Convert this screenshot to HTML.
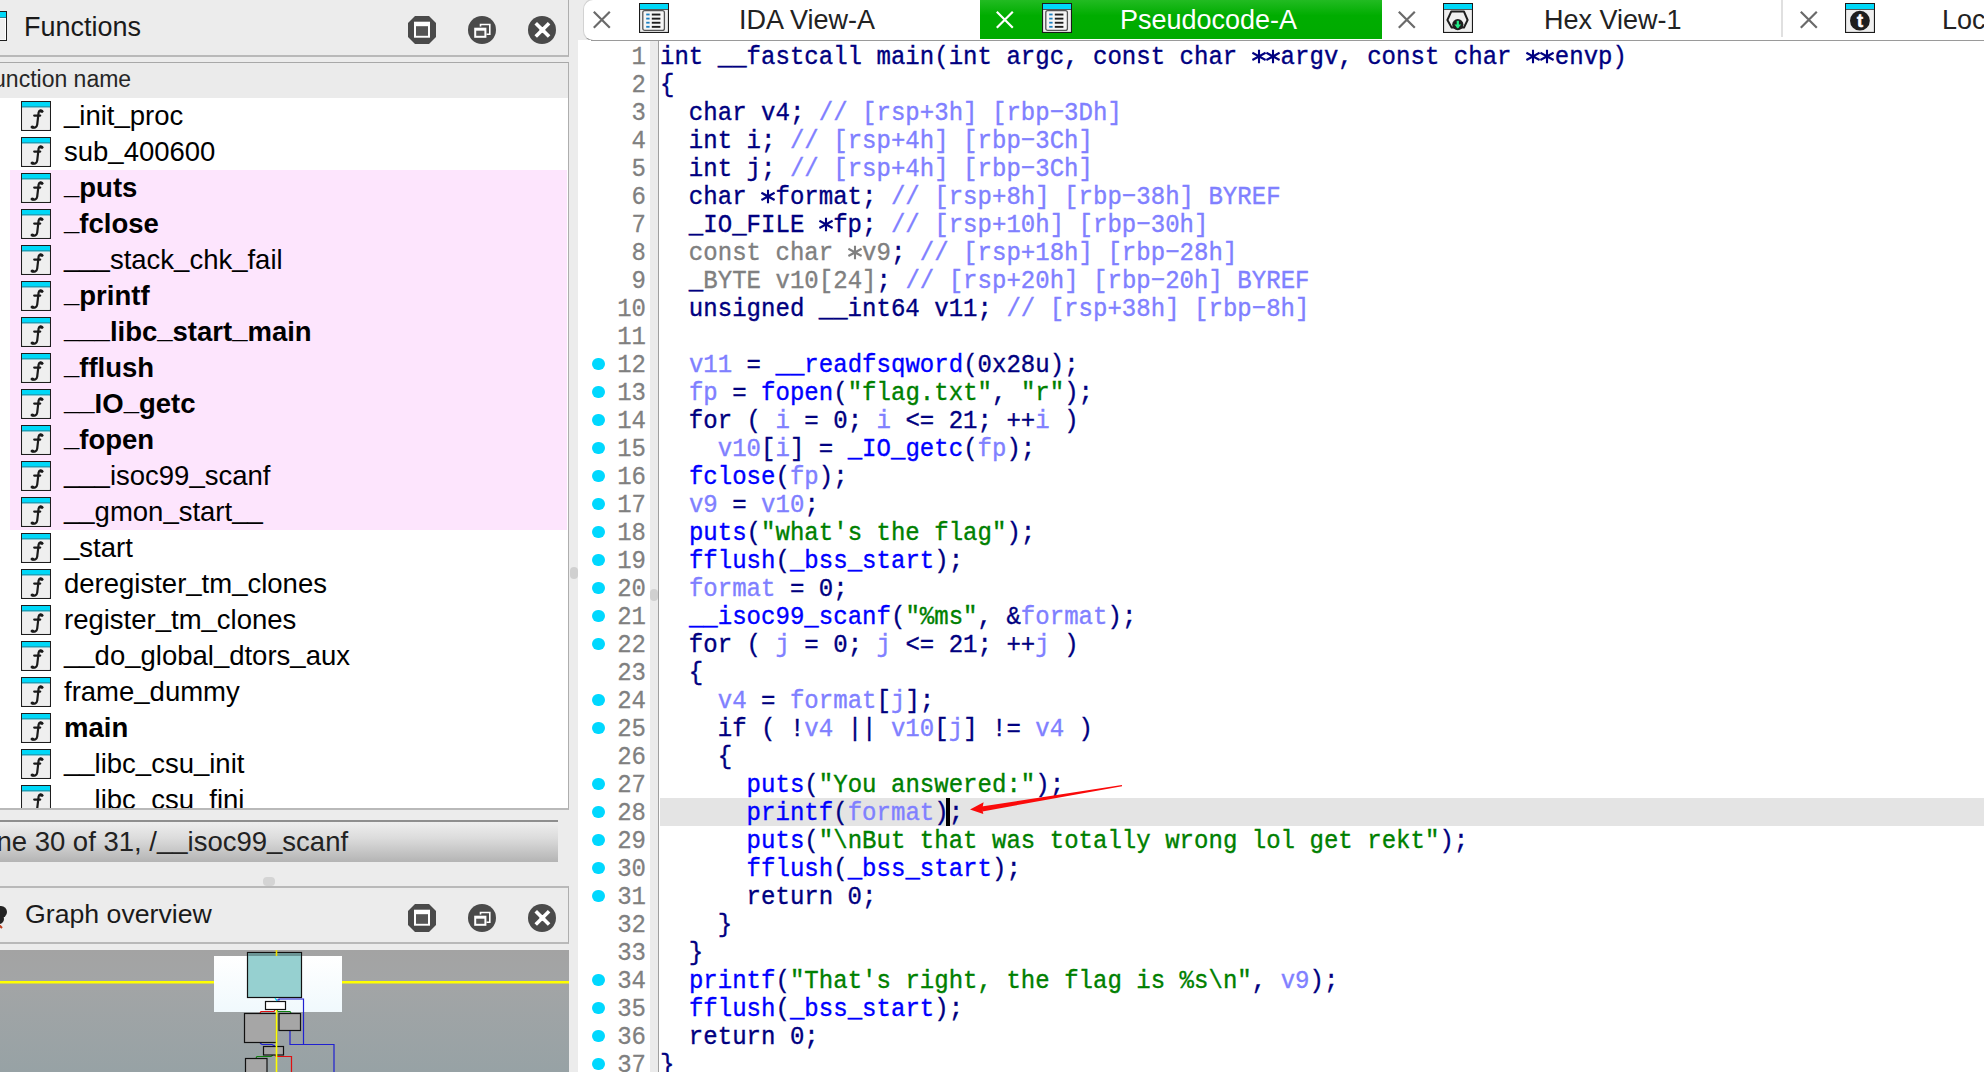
<!DOCTYPE html><html><head><meta charset="utf-8"><style>
*{margin:0;padding:0;box-sizing:border-box}
html,body{width:1984px;height:1072px;overflow:hidden;background:#ececec;position:relative;font-family:"Liberation Sans",sans-serif}
.abs{position:absolute}
/* left panel */
#fhdr{left:0;top:0;width:569px;height:57px;background:#ececec;border-right:1.5px solid #aeaeae;border-bottom:2px solid #b9b9b9}
#fhdr .t{left:24px;top:11.5px;font-size:27px;color:#1a1a1a;white-space:nowrap}
#colhdr{left:0;top:62px;width:569px;height:36px;background:#ebebeb;border-top:1.5px solid #a8a8a8;border-right:1.5px solid #aeaeae}
#colhdr .t{left:-21px;top:3px;font-size:23px;color:#262626;white-space:nowrap}
#flist{left:0;top:98px;width:569px;height:712px;background:#fff;border-right:1.5px solid #aeaeae;border-bottom:2px solid #b9b9b9;overflow:hidden}
.row{position:absolute;left:0;width:567px;height:36px}
.row.pk{background:#fde5fd;left:10px;width:557px}
.row .ic{position:absolute;left:21px;top:3px;width:30px;height:30px}
.row .nm{position:absolute;left:64px;top:2px;font-size:27.5px;color:#000;white-space:nowrap}
.row.pk .ic{left:11px}
.row.pk .nm{left:54px}
.row .nm.b{font-weight:bold}
#status{left:0;top:820px;width:558px;height:42px;border-top:2px solid #8e8e8e;background:linear-gradient(#eeeeee,#dcdcdc 40%,#b4b4b4)}
#status .t{left:-25px;top:3.5px;font-size:27.5px;color:#222;white-space:nowrap}
#split1{left:263px;top:877px;width:12px;height:9px;border-radius:4px;background:#d4d4d4}
#ghdr{left:0;top:886px;width:569px;height:58px;background:#ececec;border-top:2px solid #b9b9b9;border-right:1.5px solid #aeaeae;border-bottom:2px solid #b9b9b9}
#ghdr .t{left:25px;top:11px;font-size:26.7px;color:#1a1a1a;white-space:nowrap}
#graph{left:0;top:950px;width:570px;height:122px;overflow:hidden}
/* right */
#vsplit{left:569px;top:0;width:9px;height:1072px;background:#ececec}
#vhandle{left:570px;top:567px;width:8px;height:12px;border-radius:4px;background:#d0d0d0}
#tabbar{left:578px;top:0;width:1406px;height:40px;background:#ececec}
#tabwhite{left:583px;top:-1px;width:1401px;height:41.5px;background:#fff;border-left:1px solid #d2d2d2;border-bottom:1.5px solid #9a9a9a;border-top:1px solid #d2d2d2;border-radius:10px 0 0 10px}
#tabline{left:591px;top:39.5px;width:1393px;height:1.5px;background:#9a9a9a;z-index:5}
#gtab{left:980px;top:0;width:402px;height:39px;background:linear-gradient(#22bb22,#00ad00 40%,#00aa00)}
.tabt{position:absolute;top:5px;font-size:27px;white-space:nowrap;color:#222}
#code{left:578px;top:40px;width:1406px;height:1032px;background:#fff;overflow:hidden}
#gut{left:650px;top:40px;width:8px;height:1032px;background:#ebebeb}
#gutl{left:658px;top:40px;width:1px;height:1032px;background:#a0a0a0}
#ghandle{left:650px;top:589px;width:8px;height:12px;border-radius:4px;background:#d0d0d0}
#hl{left:660px;top:798px;width:1324px;height:28px;background:#e4e4e4}
.ln{position:absolute;left:600px;width:46px;-webkit-text-stroke:0.25px currentColor;transform-origin:0 20px;transform:translateY(2px) scaleY(1.08);text-align:right;font-family:"Liberation Mono",monospace;font-size:24px;color:#808080;height:28px;line-height:28px;white-space:pre}
.cl{position:absolute;left:660px;letter-spacing:0.03px;-webkit-text-stroke:0.35px currentColor;transform-origin:0 20px;transform:translateY(2px) scaleY(1.08);font-family:"Liberation Mono",monospace;font-size:24px;color:#000080;height:28px;line-height:28px;white-space:pre}
.dot{position:absolute;left:592px;width:12.5px;height:12.5px;border-radius:50%;background:#00d8ff}
.astsvg{position:absolute;top:4.6px;overflow:visible}
.us{position:relative;top:-3px}
.n{color:#000080}.b{color:#0000ff}.v{color:#8080ff}.c{color:#8080ff}.s{color:#008000}.g{color:#808080}
</style></head><body>
<div id="fhdr" class="abs"><svg class="abs" style="left:-17px;top:11px" width="24" height="30" viewBox="0 0 24 30"><rect x="0.5" y="0.5" width="23" height="29" fill="#fff" stroke="#1e1e1e"/><rect x="1" y="1" width="22" height="5" fill="#00d8f8"/><rect x="1" y="6" width="22" height="1" fill="#2a7f90"/><rect x="1" y="8" width="21" height="20.5" fill="#efefef"/></svg><div class="t abs">Functions</div><svg class="abs" style="left:407px;top:15px" width="30" height="30" viewBox="0 0 30 30"><path d="M8,1 L22,1 L29,8 L29,22 L22,29 L8,29 L1,22 L1,8 Z" fill="#4a4a4a"/><rect x="7" y="6.7" width="16" height="16" fill="#fff"/><rect x="9" y="11.2" width="12" height="9.6" fill="#555"/></svg><svg class="abs" style="left:467px;top:15px" width="30" height="30" viewBox="0 0 30 30"><circle cx="15" cy="15" r="14" fill="#4a4a4a"/><path d="M13.5,11.5 L13.5,9.5 L22.8,9.5 L22.8,19.3 L19.5,19.3" fill="none" stroke="#fff" stroke-width="1.6"/><rect x="7.2" y="12.7" width="12.2" height="10.1" fill="#fff"/><rect x="9.2" y="15.7" width="8.2" height="5.1" fill="#555"/></svg><svg class="abs" style="left:527px;top:15px" width="30" height="30" viewBox="0 0 30 30"><circle cx="15" cy="15" r="14" fill="#4a4a4a"/><path d="M10,9.5 L20.8,20.3 M20.8,9.5 L10,20.3" stroke="#fff" stroke-width="3.6" stroke-linecap="square"/><circle cx="15.4" cy="14.9" r="2.8" fill="#fff"/></svg></div>
<div id="colhdr" class="abs"><div class="t abs">Function name</div></div>
<div id="flist" class="abs"><div class="row" style="top:0px"><svg class="ic" viewBox="0 0 30 30" width="30" height="30"><rect x="0.5" y="0.5" width="29" height="29" fill="#fff" stroke="#1e1e1e" stroke-width="1.2"/><rect x="1" y="1" width="28" height="5.2" fill="#00d8f8"/><rect x="1" y="5.4" width="28" height="1" fill="#2a7f90"/><rect x="2" y="7" width="26" height="21" fill="#efefef"/><path d="M21.2,10.4 C20.6,8.6 18.2,8.9 17.6,11.6 L16.2,23.6 C15.8,26.2 13.6,27.2 11.4,26.4" fill="none" stroke="#1a1a1a" stroke-width="2.2" stroke-linecap="round"/><ellipse cx="20.6" cy="10.4" rx="1.9" ry="1.4" fill="#1a1a1a"/><ellipse cx="11.4" cy="26.1" rx="1.9" ry="1.5" fill="#1a1a1a"/><path d="M13.2,14.6 L19.2,14.6" stroke="#1a1a1a" stroke-width="2.2" stroke-linecap="round"/></svg><div class="nm"><span class="us">_</span>init<span class="us">_</span>proc</div></div><div class="row" style="top:36px"><svg class="ic" viewBox="0 0 30 30" width="30" height="30"><rect x="0.5" y="0.5" width="29" height="29" fill="#fff" stroke="#1e1e1e" stroke-width="1.2"/><rect x="1" y="1" width="28" height="5.2" fill="#00d8f8"/><rect x="1" y="5.4" width="28" height="1" fill="#2a7f90"/><rect x="2" y="7" width="26" height="21" fill="#efefef"/><path d="M21.2,10.4 C20.6,8.6 18.2,8.9 17.6,11.6 L16.2,23.6 C15.8,26.2 13.6,27.2 11.4,26.4" fill="none" stroke="#1a1a1a" stroke-width="2.2" stroke-linecap="round"/><ellipse cx="20.6" cy="10.4" rx="1.9" ry="1.4" fill="#1a1a1a"/><ellipse cx="11.4" cy="26.1" rx="1.9" ry="1.5" fill="#1a1a1a"/><path d="M13.2,14.6 L19.2,14.6" stroke="#1a1a1a" stroke-width="2.2" stroke-linecap="round"/></svg><div class="nm">sub<span class="us">_</span>400600</div></div><div class="row pk" style="top:72px"><svg class="ic" viewBox="0 0 30 30" width="30" height="30"><rect x="0.5" y="0.5" width="29" height="29" fill="#fff" stroke="#1e1e1e" stroke-width="1.2"/><rect x="1" y="1" width="28" height="5.2" fill="#00d8f8"/><rect x="1" y="5.4" width="28" height="1" fill="#2a7f90"/><rect x="2" y="7" width="26" height="21" fill="#efefef"/><path d="M21.2,10.4 C20.6,8.6 18.2,8.9 17.6,11.6 L16.2,23.6 C15.8,26.2 13.6,27.2 11.4,26.4" fill="none" stroke="#1a1a1a" stroke-width="2.2" stroke-linecap="round"/><ellipse cx="20.6" cy="10.4" rx="1.9" ry="1.4" fill="#1a1a1a"/><ellipse cx="11.4" cy="26.1" rx="1.9" ry="1.5" fill="#1a1a1a"/><path d="M13.2,14.6 L19.2,14.6" stroke="#1a1a1a" stroke-width="2.2" stroke-linecap="round"/></svg><div class="nm b"><span class="us">_</span>puts</div></div><div class="row pk" style="top:108px"><svg class="ic" viewBox="0 0 30 30" width="30" height="30"><rect x="0.5" y="0.5" width="29" height="29" fill="#fff" stroke="#1e1e1e" stroke-width="1.2"/><rect x="1" y="1" width="28" height="5.2" fill="#00d8f8"/><rect x="1" y="5.4" width="28" height="1" fill="#2a7f90"/><rect x="2" y="7" width="26" height="21" fill="#efefef"/><path d="M21.2,10.4 C20.6,8.6 18.2,8.9 17.6,11.6 L16.2,23.6 C15.8,26.2 13.6,27.2 11.4,26.4" fill="none" stroke="#1a1a1a" stroke-width="2.2" stroke-linecap="round"/><ellipse cx="20.6" cy="10.4" rx="1.9" ry="1.4" fill="#1a1a1a"/><ellipse cx="11.4" cy="26.1" rx="1.9" ry="1.5" fill="#1a1a1a"/><path d="M13.2,14.6 L19.2,14.6" stroke="#1a1a1a" stroke-width="2.2" stroke-linecap="round"/></svg><div class="nm b"><span class="us">_</span>fclose</div></div><div class="row pk" style="top:144px"><svg class="ic" viewBox="0 0 30 30" width="30" height="30"><rect x="0.5" y="0.5" width="29" height="29" fill="#fff" stroke="#1e1e1e" stroke-width="1.2"/><rect x="1" y="1" width="28" height="5.2" fill="#00d8f8"/><rect x="1" y="5.4" width="28" height="1" fill="#2a7f90"/><rect x="2" y="7" width="26" height="21" fill="#efefef"/><path d="M21.2,10.4 C20.6,8.6 18.2,8.9 17.6,11.6 L16.2,23.6 C15.8,26.2 13.6,27.2 11.4,26.4" fill="none" stroke="#1a1a1a" stroke-width="2.2" stroke-linecap="round"/><ellipse cx="20.6" cy="10.4" rx="1.9" ry="1.4" fill="#1a1a1a"/><ellipse cx="11.4" cy="26.1" rx="1.9" ry="1.5" fill="#1a1a1a"/><path d="M13.2,14.6 L19.2,14.6" stroke="#1a1a1a" stroke-width="2.2" stroke-linecap="round"/></svg><div class="nm"><span class="us">_</span><span class="us">_</span><span class="us">_</span>stack<span class="us">_</span>chk<span class="us">_</span>fail</div></div><div class="row pk" style="top:180px"><svg class="ic" viewBox="0 0 30 30" width="30" height="30"><rect x="0.5" y="0.5" width="29" height="29" fill="#fff" stroke="#1e1e1e" stroke-width="1.2"/><rect x="1" y="1" width="28" height="5.2" fill="#00d8f8"/><rect x="1" y="5.4" width="28" height="1" fill="#2a7f90"/><rect x="2" y="7" width="26" height="21" fill="#efefef"/><path d="M21.2,10.4 C20.6,8.6 18.2,8.9 17.6,11.6 L16.2,23.6 C15.8,26.2 13.6,27.2 11.4,26.4" fill="none" stroke="#1a1a1a" stroke-width="2.2" stroke-linecap="round"/><ellipse cx="20.6" cy="10.4" rx="1.9" ry="1.4" fill="#1a1a1a"/><ellipse cx="11.4" cy="26.1" rx="1.9" ry="1.5" fill="#1a1a1a"/><path d="M13.2,14.6 L19.2,14.6" stroke="#1a1a1a" stroke-width="2.2" stroke-linecap="round"/></svg><div class="nm b"><span class="us">_</span>printf</div></div><div class="row pk" style="top:216px"><svg class="ic" viewBox="0 0 30 30" width="30" height="30"><rect x="0.5" y="0.5" width="29" height="29" fill="#fff" stroke="#1e1e1e" stroke-width="1.2"/><rect x="1" y="1" width="28" height="5.2" fill="#00d8f8"/><rect x="1" y="5.4" width="28" height="1" fill="#2a7f90"/><rect x="2" y="7" width="26" height="21" fill="#efefef"/><path d="M21.2,10.4 C20.6,8.6 18.2,8.9 17.6,11.6 L16.2,23.6 C15.8,26.2 13.6,27.2 11.4,26.4" fill="none" stroke="#1a1a1a" stroke-width="2.2" stroke-linecap="round"/><ellipse cx="20.6" cy="10.4" rx="1.9" ry="1.4" fill="#1a1a1a"/><ellipse cx="11.4" cy="26.1" rx="1.9" ry="1.5" fill="#1a1a1a"/><path d="M13.2,14.6 L19.2,14.6" stroke="#1a1a1a" stroke-width="2.2" stroke-linecap="round"/></svg><div class="nm b"><span class="us">_</span><span class="us">_</span><span class="us">_</span>libc<span class="us">_</span>start<span class="us">_</span>main</div></div><div class="row pk" style="top:252px"><svg class="ic" viewBox="0 0 30 30" width="30" height="30"><rect x="0.5" y="0.5" width="29" height="29" fill="#fff" stroke="#1e1e1e" stroke-width="1.2"/><rect x="1" y="1" width="28" height="5.2" fill="#00d8f8"/><rect x="1" y="5.4" width="28" height="1" fill="#2a7f90"/><rect x="2" y="7" width="26" height="21" fill="#efefef"/><path d="M21.2,10.4 C20.6,8.6 18.2,8.9 17.6,11.6 L16.2,23.6 C15.8,26.2 13.6,27.2 11.4,26.4" fill="none" stroke="#1a1a1a" stroke-width="2.2" stroke-linecap="round"/><ellipse cx="20.6" cy="10.4" rx="1.9" ry="1.4" fill="#1a1a1a"/><ellipse cx="11.4" cy="26.1" rx="1.9" ry="1.5" fill="#1a1a1a"/><path d="M13.2,14.6 L19.2,14.6" stroke="#1a1a1a" stroke-width="2.2" stroke-linecap="round"/></svg><div class="nm b"><span class="us">_</span>fflush</div></div><div class="row pk" style="top:288px"><svg class="ic" viewBox="0 0 30 30" width="30" height="30"><rect x="0.5" y="0.5" width="29" height="29" fill="#fff" stroke="#1e1e1e" stroke-width="1.2"/><rect x="1" y="1" width="28" height="5.2" fill="#00d8f8"/><rect x="1" y="5.4" width="28" height="1" fill="#2a7f90"/><rect x="2" y="7" width="26" height="21" fill="#efefef"/><path d="M21.2,10.4 C20.6,8.6 18.2,8.9 17.6,11.6 L16.2,23.6 C15.8,26.2 13.6,27.2 11.4,26.4" fill="none" stroke="#1a1a1a" stroke-width="2.2" stroke-linecap="round"/><ellipse cx="20.6" cy="10.4" rx="1.9" ry="1.4" fill="#1a1a1a"/><ellipse cx="11.4" cy="26.1" rx="1.9" ry="1.5" fill="#1a1a1a"/><path d="M13.2,14.6 L19.2,14.6" stroke="#1a1a1a" stroke-width="2.2" stroke-linecap="round"/></svg><div class="nm b"><span class="us">_</span><span class="us">_</span>IO<span class="us">_</span>getc</div></div><div class="row pk" style="top:324px"><svg class="ic" viewBox="0 0 30 30" width="30" height="30"><rect x="0.5" y="0.5" width="29" height="29" fill="#fff" stroke="#1e1e1e" stroke-width="1.2"/><rect x="1" y="1" width="28" height="5.2" fill="#00d8f8"/><rect x="1" y="5.4" width="28" height="1" fill="#2a7f90"/><rect x="2" y="7" width="26" height="21" fill="#efefef"/><path d="M21.2,10.4 C20.6,8.6 18.2,8.9 17.6,11.6 L16.2,23.6 C15.8,26.2 13.6,27.2 11.4,26.4" fill="none" stroke="#1a1a1a" stroke-width="2.2" stroke-linecap="round"/><ellipse cx="20.6" cy="10.4" rx="1.9" ry="1.4" fill="#1a1a1a"/><ellipse cx="11.4" cy="26.1" rx="1.9" ry="1.5" fill="#1a1a1a"/><path d="M13.2,14.6 L19.2,14.6" stroke="#1a1a1a" stroke-width="2.2" stroke-linecap="round"/></svg><div class="nm b"><span class="us">_</span>fopen</div></div><div class="row pk" style="top:360px"><svg class="ic" viewBox="0 0 30 30" width="30" height="30"><rect x="0.5" y="0.5" width="29" height="29" fill="#fff" stroke="#1e1e1e" stroke-width="1.2"/><rect x="1" y="1" width="28" height="5.2" fill="#00d8f8"/><rect x="1" y="5.4" width="28" height="1" fill="#2a7f90"/><rect x="2" y="7" width="26" height="21" fill="#efefef"/><path d="M21.2,10.4 C20.6,8.6 18.2,8.9 17.6,11.6 L16.2,23.6 C15.8,26.2 13.6,27.2 11.4,26.4" fill="none" stroke="#1a1a1a" stroke-width="2.2" stroke-linecap="round"/><ellipse cx="20.6" cy="10.4" rx="1.9" ry="1.4" fill="#1a1a1a"/><ellipse cx="11.4" cy="26.1" rx="1.9" ry="1.5" fill="#1a1a1a"/><path d="M13.2,14.6 L19.2,14.6" stroke="#1a1a1a" stroke-width="2.2" stroke-linecap="round"/></svg><div class="nm"><span class="us">_</span><span class="us">_</span><span class="us">_</span>isoc99<span class="us">_</span>scanf</div></div><div class="row pk" style="top:396px"><svg class="ic" viewBox="0 0 30 30" width="30" height="30"><rect x="0.5" y="0.5" width="29" height="29" fill="#fff" stroke="#1e1e1e" stroke-width="1.2"/><rect x="1" y="1" width="28" height="5.2" fill="#00d8f8"/><rect x="1" y="5.4" width="28" height="1" fill="#2a7f90"/><rect x="2" y="7" width="26" height="21" fill="#efefef"/><path d="M21.2,10.4 C20.6,8.6 18.2,8.9 17.6,11.6 L16.2,23.6 C15.8,26.2 13.6,27.2 11.4,26.4" fill="none" stroke="#1a1a1a" stroke-width="2.2" stroke-linecap="round"/><ellipse cx="20.6" cy="10.4" rx="1.9" ry="1.4" fill="#1a1a1a"/><ellipse cx="11.4" cy="26.1" rx="1.9" ry="1.5" fill="#1a1a1a"/><path d="M13.2,14.6 L19.2,14.6" stroke="#1a1a1a" stroke-width="2.2" stroke-linecap="round"/></svg><div class="nm"><span class="us">_</span><span class="us">_</span>gmon<span class="us">_</span>start<span class="us">_</span><span class="us">_</span></div></div><div class="row" style="top:432px"><svg class="ic" viewBox="0 0 30 30" width="30" height="30"><rect x="0.5" y="0.5" width="29" height="29" fill="#fff" stroke="#1e1e1e" stroke-width="1.2"/><rect x="1" y="1" width="28" height="5.2" fill="#00d8f8"/><rect x="1" y="5.4" width="28" height="1" fill="#2a7f90"/><rect x="2" y="7" width="26" height="21" fill="#efefef"/><path d="M21.2,10.4 C20.6,8.6 18.2,8.9 17.6,11.6 L16.2,23.6 C15.8,26.2 13.6,27.2 11.4,26.4" fill="none" stroke="#1a1a1a" stroke-width="2.2" stroke-linecap="round"/><ellipse cx="20.6" cy="10.4" rx="1.9" ry="1.4" fill="#1a1a1a"/><ellipse cx="11.4" cy="26.1" rx="1.9" ry="1.5" fill="#1a1a1a"/><path d="M13.2,14.6 L19.2,14.6" stroke="#1a1a1a" stroke-width="2.2" stroke-linecap="round"/></svg><div class="nm"><span class="us">_</span>start</div></div><div class="row" style="top:468px"><svg class="ic" viewBox="0 0 30 30" width="30" height="30"><rect x="0.5" y="0.5" width="29" height="29" fill="#fff" stroke="#1e1e1e" stroke-width="1.2"/><rect x="1" y="1" width="28" height="5.2" fill="#00d8f8"/><rect x="1" y="5.4" width="28" height="1" fill="#2a7f90"/><rect x="2" y="7" width="26" height="21" fill="#efefef"/><path d="M21.2,10.4 C20.6,8.6 18.2,8.9 17.6,11.6 L16.2,23.6 C15.8,26.2 13.6,27.2 11.4,26.4" fill="none" stroke="#1a1a1a" stroke-width="2.2" stroke-linecap="round"/><ellipse cx="20.6" cy="10.4" rx="1.9" ry="1.4" fill="#1a1a1a"/><ellipse cx="11.4" cy="26.1" rx="1.9" ry="1.5" fill="#1a1a1a"/><path d="M13.2,14.6 L19.2,14.6" stroke="#1a1a1a" stroke-width="2.2" stroke-linecap="round"/></svg><div class="nm">deregister<span class="us">_</span>tm<span class="us">_</span>clones</div></div><div class="row" style="top:504px"><svg class="ic" viewBox="0 0 30 30" width="30" height="30"><rect x="0.5" y="0.5" width="29" height="29" fill="#fff" stroke="#1e1e1e" stroke-width="1.2"/><rect x="1" y="1" width="28" height="5.2" fill="#00d8f8"/><rect x="1" y="5.4" width="28" height="1" fill="#2a7f90"/><rect x="2" y="7" width="26" height="21" fill="#efefef"/><path d="M21.2,10.4 C20.6,8.6 18.2,8.9 17.6,11.6 L16.2,23.6 C15.8,26.2 13.6,27.2 11.4,26.4" fill="none" stroke="#1a1a1a" stroke-width="2.2" stroke-linecap="round"/><ellipse cx="20.6" cy="10.4" rx="1.9" ry="1.4" fill="#1a1a1a"/><ellipse cx="11.4" cy="26.1" rx="1.9" ry="1.5" fill="#1a1a1a"/><path d="M13.2,14.6 L19.2,14.6" stroke="#1a1a1a" stroke-width="2.2" stroke-linecap="round"/></svg><div class="nm">register<span class="us">_</span>tm<span class="us">_</span>clones</div></div><div class="row" style="top:540px"><svg class="ic" viewBox="0 0 30 30" width="30" height="30"><rect x="0.5" y="0.5" width="29" height="29" fill="#fff" stroke="#1e1e1e" stroke-width="1.2"/><rect x="1" y="1" width="28" height="5.2" fill="#00d8f8"/><rect x="1" y="5.4" width="28" height="1" fill="#2a7f90"/><rect x="2" y="7" width="26" height="21" fill="#efefef"/><path d="M21.2,10.4 C20.6,8.6 18.2,8.9 17.6,11.6 L16.2,23.6 C15.8,26.2 13.6,27.2 11.4,26.4" fill="none" stroke="#1a1a1a" stroke-width="2.2" stroke-linecap="round"/><ellipse cx="20.6" cy="10.4" rx="1.9" ry="1.4" fill="#1a1a1a"/><ellipse cx="11.4" cy="26.1" rx="1.9" ry="1.5" fill="#1a1a1a"/><path d="M13.2,14.6 L19.2,14.6" stroke="#1a1a1a" stroke-width="2.2" stroke-linecap="round"/></svg><div class="nm"><span class="us">_</span><span class="us">_</span>do<span class="us">_</span>global<span class="us">_</span>dtors<span class="us">_</span>aux</div></div><div class="row" style="top:576px"><svg class="ic" viewBox="0 0 30 30" width="30" height="30"><rect x="0.5" y="0.5" width="29" height="29" fill="#fff" stroke="#1e1e1e" stroke-width="1.2"/><rect x="1" y="1" width="28" height="5.2" fill="#00d8f8"/><rect x="1" y="5.4" width="28" height="1" fill="#2a7f90"/><rect x="2" y="7" width="26" height="21" fill="#efefef"/><path d="M21.2,10.4 C20.6,8.6 18.2,8.9 17.6,11.6 L16.2,23.6 C15.8,26.2 13.6,27.2 11.4,26.4" fill="none" stroke="#1a1a1a" stroke-width="2.2" stroke-linecap="round"/><ellipse cx="20.6" cy="10.4" rx="1.9" ry="1.4" fill="#1a1a1a"/><ellipse cx="11.4" cy="26.1" rx="1.9" ry="1.5" fill="#1a1a1a"/><path d="M13.2,14.6 L19.2,14.6" stroke="#1a1a1a" stroke-width="2.2" stroke-linecap="round"/></svg><div class="nm">frame<span class="us">_</span>dummy</div></div><div class="row" style="top:612px"><svg class="ic" viewBox="0 0 30 30" width="30" height="30"><rect x="0.5" y="0.5" width="29" height="29" fill="#fff" stroke="#1e1e1e" stroke-width="1.2"/><rect x="1" y="1" width="28" height="5.2" fill="#00d8f8"/><rect x="1" y="5.4" width="28" height="1" fill="#2a7f90"/><rect x="2" y="7" width="26" height="21" fill="#efefef"/><path d="M21.2,10.4 C20.6,8.6 18.2,8.9 17.6,11.6 L16.2,23.6 C15.8,26.2 13.6,27.2 11.4,26.4" fill="none" stroke="#1a1a1a" stroke-width="2.2" stroke-linecap="round"/><ellipse cx="20.6" cy="10.4" rx="1.9" ry="1.4" fill="#1a1a1a"/><ellipse cx="11.4" cy="26.1" rx="1.9" ry="1.5" fill="#1a1a1a"/><path d="M13.2,14.6 L19.2,14.6" stroke="#1a1a1a" stroke-width="2.2" stroke-linecap="round"/></svg><div class="nm b">main</div></div><div class="row" style="top:648px"><svg class="ic" viewBox="0 0 30 30" width="30" height="30"><rect x="0.5" y="0.5" width="29" height="29" fill="#fff" stroke="#1e1e1e" stroke-width="1.2"/><rect x="1" y="1" width="28" height="5.2" fill="#00d8f8"/><rect x="1" y="5.4" width="28" height="1" fill="#2a7f90"/><rect x="2" y="7" width="26" height="21" fill="#efefef"/><path d="M21.2,10.4 C20.6,8.6 18.2,8.9 17.6,11.6 L16.2,23.6 C15.8,26.2 13.6,27.2 11.4,26.4" fill="none" stroke="#1a1a1a" stroke-width="2.2" stroke-linecap="round"/><ellipse cx="20.6" cy="10.4" rx="1.9" ry="1.4" fill="#1a1a1a"/><ellipse cx="11.4" cy="26.1" rx="1.9" ry="1.5" fill="#1a1a1a"/><path d="M13.2,14.6 L19.2,14.6" stroke="#1a1a1a" stroke-width="2.2" stroke-linecap="round"/></svg><div class="nm"><span class="us">_</span><span class="us">_</span>libc<span class="us">_</span>csu<span class="us">_</span>init</div></div><div class="row" style="top:684px"><svg class="ic" viewBox="0 0 30 30" width="30" height="30"><rect x="0.5" y="0.5" width="29" height="29" fill="#fff" stroke="#1e1e1e" stroke-width="1.2"/><rect x="1" y="1" width="28" height="5.2" fill="#00d8f8"/><rect x="1" y="5.4" width="28" height="1" fill="#2a7f90"/><rect x="2" y="7" width="26" height="21" fill="#efefef"/><path d="M21.2,10.4 C20.6,8.6 18.2,8.9 17.6,11.6 L16.2,23.6 C15.8,26.2 13.6,27.2 11.4,26.4" fill="none" stroke="#1a1a1a" stroke-width="2.2" stroke-linecap="round"/><ellipse cx="20.6" cy="10.4" rx="1.9" ry="1.4" fill="#1a1a1a"/><ellipse cx="11.4" cy="26.1" rx="1.9" ry="1.5" fill="#1a1a1a"/><path d="M13.2,14.6 L19.2,14.6" stroke="#1a1a1a" stroke-width="2.2" stroke-linecap="round"/></svg><div class="nm"><span class="us">_</span><span class="us">_</span>libc<span class="us">_</span>csu<span class="us">_</span>fini</div></div></div>
<div id="status" class="abs"><div class="t abs">Line 30 of 31, /<span class="us">_</span><span class="us">_</span>isoc99<span class="us">_</span>scanf</div></div>
<div id="split1" class="abs"></div>
<div id="ghdr" class="abs"><svg class="abs" style="left:-2px;top:16px" width="12" height="30" viewBox="0 0 12 30"><circle cx="3" cy="8" r="6" fill="#222"/><circle cx="1" cy="15" r="5" fill="#222"/><path d="M0,20 L4,24" stroke="#c04020" stroke-width="2"/></svg><div class="t abs">Graph overview</div><svg class="abs" style="left:407px;top:15px" width="30" height="30" viewBox="0 0 30 30"><path d="M8,1 L22,1 L29,8 L29,22 L22,29 L8,29 L1,22 L1,8 Z" fill="#4a4a4a"/><rect x="7" y="6.7" width="16" height="16" fill="#fff"/><rect x="9" y="11.2" width="12" height="9.6" fill="#555"/></svg><svg class="abs" style="left:467px;top:15px" width="30" height="30" viewBox="0 0 30 30"><circle cx="15" cy="15" r="14" fill="#4a4a4a"/><path d="M13.5,11.5 L13.5,9.5 L22.8,9.5 L22.8,19.3 L19.5,19.3" fill="none" stroke="#fff" stroke-width="1.6"/><rect x="7.2" y="12.7" width="12.2" height="10.1" fill="#fff"/><rect x="9.2" y="15.7" width="8.2" height="5.1" fill="#555"/></svg><svg class="abs" style="left:527px;top:15px" width="30" height="30" viewBox="0 0 30 30"><circle cx="15" cy="15" r="14" fill="#4a4a4a"/><path d="M10,9.5 L20.8,20.3 M20.8,9.5 L10,20.3" stroke="#fff" stroke-width="3.6" stroke-linecap="square"/><circle cx="15.4" cy="14.9" r="2.8" fill="#fff"/></svg></div>
<div id="graph" class="abs"><svg width="570" height="122" viewBox="0 950 570 122" style="position:absolute;left:0;top:0">
<defs><linearGradient id="gbg" x1="0" y1="0" x2="0" y2="1"><stop offset="0" stop-color="#a3a3a3"/><stop offset="0.25" stop-color="#a3a5a6"/><stop offset="1" stop-color="#97a2a5"/></linearGradient>
<linearGradient id="wbg" x1="0" y1="0" x2="0" y2="1"><stop offset="0" stop-color="#ffffff"/><stop offset="1" stop-color="#f0f9fd"/></linearGradient></defs>
<rect x="0" y="950" width="570" height="122" fill="url(#gbg)"/>
<rect x="0" y="981" width="570" height="2.5" fill="#ffff00"/>
<rect x="214" y="956" width="128" height="56" fill="url(#wbg)"/>
<rect x="247.5" y="952.5" width="54" height="45" fill="#96d0d0" stroke="#111" stroke-width="1.2"/>
<rect x="248" y="953" width="53" height="3" fill="#6a9494"/>
<path d="M276,1000 L279,1000 L279,999 L303.5,999 L303.5,1044.5 L334,1044.5 L334,1072" fill="none" stroke="#2020d0" stroke-width="1.2"/>
<path d="M290,1031 L290,1044.5 L303.5,1044.5" fill="none" stroke="#2020d0" stroke-width="1.2"/>
<path d="M260,1043 L262,1044.5 L272,1044.5 L275,1046" fill="none" stroke="#2020d0" stroke-width="1.2"/>
<path d="M260,1013 L261,1011.5 L274,1011.5 L275,1010" fill="none" stroke="#e01010" stroke-width="1.2"/>
<path d="M277,1010 L278,1011.5 L290,1011.5 L291,1013" fill="none" stroke="#108010" stroke-width="1.2"/>
<rect x="265.5" y="1001.5" width="20" height="8" fill="#fff" stroke="#111" stroke-width="1.2"/>
<rect x="244.5" y="1013.5" width="32" height="29" fill="#a6a6a6" stroke="#111" stroke-width="1.2"/>
<rect x="279" y="1013.5" width="21.5" height="17" fill="#a6a6a6" stroke="#111" stroke-width="1.2"/>
<path d="M256,1058 L257,1056.5 L271,1056.5 L273,1055" fill="none" stroke="#108010" stroke-width="1.2"/>
<path d="M275,1055 L276,1056.5 L291.5,1056.5 L291.5,1072" fill="none" stroke="#e01010" stroke-width="1.2"/>
<rect x="263.5" y="1046.5" width="20" height="8.5" fill="#a6a6a6" stroke="#111" stroke-width="1.2"/>
<rect x="245.5" y="1058.5" width="21.5" height="20" fill="#a6a6a6" stroke="#111" stroke-width="1.2"/>
<path d="M276.5,1010 L276.5,1072" stroke="#ffff00" stroke-width="1.6"/>
<path d="M276.5,950 L276.5,956" stroke="#f0e000" stroke-width="1.6"/>
<path d="M275,998 L277,1001" stroke="#00e0f0" stroke-width="1.2"/>
</svg></div>
<div id="vsplit" class="abs"></div><div id="vhandle" class="abs"></div>
<div id="tabbar" class="abs"></div><div id="tabwhite" class="abs"></div><div id="gtab" class="abs"></div><div id="tabline" class="abs"></div>
<svg class="abs" style="left:592px;top:10px" width="20" height="20" viewBox="0 0 20 20"><path d="M1.8,1.8 L17.8,17.8 M17.8,1.8 L1.8,17.8" stroke="#6a6a6a" stroke-width="2.2"/></svg><svg class="abs" style="left:639px;top:3px" width="30" height="30" viewBox="0 0 30 30"><rect x="0.5" y="0.5" width="29" height="29" fill="#efefef" stroke="#1a1a1a" stroke-width="1.2"/><rect x="1" y="1" width="28" height="5" fill="#00d8f8"/><rect x="1" y="6" width="28" height="1" fill="#555"/><rect x="3.8" y="7.6" width="21.6" height="19.8" rx="2" fill="#f6f6f6" stroke="#555" stroke-width="1.3"/><rect x="7.2" y="10.6" width="3.4" height="1.8" fill="#1b7fc0"/><rect x="12.8" y="10.6" width="8.6" height="1.9" fill="#1e1e1e"/><rect x="7.2" y="14.7" width="3.4" height="1.8" fill="#1b7fc0"/><rect x="12.8" y="14.7" width="8.6" height="1.9" fill="#1e1e1e"/><rect x="7.2" y="18.8" width="3.4" height="1.8" fill="#1b7fc0"/><rect x="12.8" y="18.8" width="8.6" height="1.9" fill="#1e1e1e"/><rect x="7.2" y="22.9" width="3.4" height="1.8" fill="#1b7fc0"/><rect x="12.8" y="22.9" width="8.6" height="1.9" fill="#1e1e1e"/></svg><div class="tabt" style="left:739px">IDA View-A</div><svg class="abs" style="left:995px;top:10px" width="20" height="20" viewBox="0 0 20 20"><path d="M1.8,1.8 L17.8,17.8 M17.8,1.8 L1.8,17.8" stroke="#ffffff" stroke-width="2.2"/></svg><svg class="abs" style="left:1042px;top:3px" width="30" height="30" viewBox="0 0 30 30"><rect x="0.5" y="0.5" width="29" height="29" fill="#efefef" stroke="#1a1a1a" stroke-width="1.2"/><rect x="1" y="1" width="28" height="5" fill="#00d8f8"/><rect x="1" y="6" width="28" height="1" fill="#555"/><rect x="3.8" y="7.6" width="21.6" height="19.8" rx="2" fill="#f6f6f6" stroke="#555" stroke-width="1.3"/><rect x="7.2" y="10.6" width="3.4" height="1.8" fill="#1b7fc0"/><rect x="12.8" y="10.6" width="8.6" height="1.9" fill="#1e1e1e"/><rect x="7.2" y="14.7" width="3.4" height="1.8" fill="#1b7fc0"/><rect x="12.8" y="14.7" width="8.6" height="1.9" fill="#1e1e1e"/><rect x="7.2" y="18.8" width="3.4" height="1.8" fill="#1b7fc0"/><rect x="12.8" y="18.8" width="8.6" height="1.9" fill="#1e1e1e"/><rect x="7.2" y="22.9" width="3.4" height="1.8" fill="#1b7fc0"/><rect x="12.8" y="22.9" width="8.6" height="1.9" fill="#1e1e1e"/></svg><div class="tabt" style="left:1120px;color:#fff">Pseudocode-A</div><svg class="abs" style="left:1397px;top:10px" width="20" height="20" viewBox="0 0 20 20"><path d="M1.8,1.8 L17.8,17.8 M17.8,1.8 L1.8,17.8" stroke="#6a6a6a" stroke-width="2.2"/></svg><svg class="abs" style="left:1443px;top:3px" width="30" height="30" viewBox="0 0 30 30"><rect x="0.5" y="0.5" width="29" height="29" fill="#efefef" stroke="#1a1a1a" stroke-width="1.2"/><rect x="1" y="1" width="28" height="5" fill="#00d8f8"/><rect x="1" y="6" width="28" height="1" fill="#555"/><path d="M8.2,8.6 L21,8.6 L24.6,17 L21,24.5 L8.6,24.5 L4.4,17 Z" fill="none" stroke="#1e1e1e" stroke-width="2" stroke-linejoin="round"/><circle cx="14.8" cy="21.6" r="5.6" fill="#1e1e1e"/><path d="M14.8,17.8 L14.8,24.6" stroke="#22ee88" stroke-width="2.2"/><path d="M11.4,21.6 L14.8,25.6 L18.2,21.6 Z" fill="#22ee88"/></svg><div class="tabt" style="left:1544px">Hex View-1</div><div class="abs" style="left:1781px;top:0;width:2px;height:37px;background:#e0e0e0"></div><svg class="abs" style="left:1799px;top:10px" width="20" height="20" viewBox="0 0 20 20"><path d="M1.8,1.8 L17.8,17.8 M17.8,1.8 L1.8,17.8" stroke="#6a6a6a" stroke-width="2.2"/></svg><svg class="abs" style="left:1845px;top:3px" width="30" height="30" viewBox="0 0 30 30"><rect x="0.5" y="0.5" width="29" height="29" fill="#efefef" stroke="#1a1a1a" stroke-width="1.2"/><rect x="1" y="1" width="28" height="5" fill="#00d8f8"/><rect x="1" y="6" width="28" height="1" fill="#555"/><circle cx="14.9" cy="17.7" r="9.9" fill="#1e1e1e"/><text x="15" y="24" text-anchor="middle" font-family="Liberation Sans" font-weight="bold" font-size="18" fill="#fff" stroke="#fff" stroke-width="0.6">t</text></svg><div class="tabt" style="left:1942px">Local Types</div>
<div id="code" class="abs"></div>
<div id="hl" class="abs"></div>
<div id="gut" class="abs"></div><div id="gutl" class="abs"></div><div id="ghandle" class="abs"></div>
<div class="ln" style="top:42px">1</div>
<div class="cl" style="top:42px"><span class="n">int __fastcall main(int argc, const char   argv, const char   envp)</span><svg class="astsvg" style="left:590.83px" width="16" height="16" viewBox="-8 -8 16 16"><path d="M0,-6.3 L0,6.3 M-6.6,-3.4 L6.6,3.4 M-6.6,3.4 L6.6,-3.4" stroke="#000080" stroke-width="2.1"/></svg><svg class="astsvg" style="left:605.26px" width="16" height="16" viewBox="-8 -8 16 16"><path d="M0,-6.3 L0,6.3 M-6.6,-3.4 L6.6,3.4 M-6.6,3.4 L6.6,-3.4" stroke="#000080" stroke-width="2.1"/></svg><svg class="astsvg" style="left:865.00px" width="16" height="16" viewBox="-8 -8 16 16"><path d="M0,-6.3 L0,6.3 M-6.6,-3.4 L6.6,3.4 M-6.6,3.4 L6.6,-3.4" stroke="#000080" stroke-width="2.1"/></svg><svg class="astsvg" style="left:879.43px" width="16" height="16" viewBox="-8 -8 16 16"><path d="M0,-6.3 L0,6.3 M-6.6,-3.4 L6.6,3.4 M-6.6,3.4 L6.6,-3.4" stroke="#000080" stroke-width="2.1"/></svg></div>
<div class="ln" style="top:70px">2</div>
<div class="cl" style="top:70px"><span class="n">{</span></div>
<div class="ln" style="top:98px">3</div>
<div class="cl" style="top:98px"><span class="n">  char v4; </span><span class="c">// [rsp+3h] [rbp−3Dh]</span></div>
<div class="ln" style="top:126px">4</div>
<div class="cl" style="top:126px"><span class="n">  int i; </span><span class="c">// [rsp+4h] [rbp−3Ch]</span></div>
<div class="ln" style="top:154px">5</div>
<div class="cl" style="top:154px"><span class="n">  int j; </span><span class="c">// [rsp+4h] [rbp−3Ch]</span></div>
<div class="ln" style="top:182px">6</div>
<div class="cl" style="top:182px"><span class="n">  char  format; </span><span class="c">// [rsp+8h] [rbp−38h] BYREF</span><svg class="astsvg" style="left:100.21px" width="16" height="16" viewBox="-8 -8 16 16"><path d="M0,-6.3 L0,6.3 M-6.6,-3.4 L6.6,3.4 M-6.6,3.4 L6.6,-3.4" stroke="#000080" stroke-width="2.1"/></svg></div>
<div class="ln" style="top:210px">7</div>
<div class="cl" style="top:210px"><span class="n">  _IO_FILE  fp; </span><span class="c">// [rsp+10h] [rbp−30h]</span><svg class="astsvg" style="left:157.93px" width="16" height="16" viewBox="-8 -8 16 16"><path d="M0,-6.3 L0,6.3 M-6.6,-3.4 L6.6,3.4 M-6.6,3.4 L6.6,-3.4" stroke="#000080" stroke-width="2.1"/></svg></div>
<div class="ln" style="top:238px">8</div>
<div class="cl" style="top:238px"><span class="g">  const char  v9</span><span class="n">; </span><span class="c">// [rsp+18h] [rbp−28h]</span><svg class="astsvg" style="left:186.79px" width="16" height="16" viewBox="-8 -8 16 16"><path d="M0,-6.3 L0,6.3 M-6.6,-3.4 L6.6,3.4 M-6.6,3.4 L6.6,-3.4" stroke="#808080" stroke-width="2.1"/></svg></div>
<div class="ln" style="top:266px">9</div>
<div class="cl" style="top:266px"><span class="n">  _</span><span class="g">BYTE v10[24]</span><span class="n">; </span><span class="c">// [rsp+20h] [rbp−20h] BYREF</span></div>
<div class="ln" style="top:294px">10</div>
<div class="cl" style="top:294px"><span class="n">  unsigned __int64 v11; </span><span class="c">// [rsp+38h] [rbp−8h]</span></div>
<div class="ln" style="top:322px">11</div>
<div class="cl" style="top:322px"><span class="n"></span></div>
<div class="dot" style="top:357.8px"></div>
<div class="ln" style="top:350px">12</div>
<div class="cl" style="top:350px"><span class="n">  </span><span class="v">v11</span><span class="n"> = </span><span class="b">__readfsqword</span><span class="n">(0x28u);</span></div>
<div class="dot" style="top:385.8px"></div>
<div class="ln" style="top:378px">13</div>
<div class="cl" style="top:378px"><span class="n">  </span><span class="v">fp</span><span class="n"> = </span><span class="b">fopen</span><span class="n">(</span><span class="s">"flag.txt"</span><span class="n">, </span><span class="s">"r"</span><span class="n">);</span></div>
<div class="dot" style="top:413.8px"></div>
<div class="ln" style="top:406px">14</div>
<div class="cl" style="top:406px"><span class="n">  for ( </span><span class="v">i</span><span class="n"> = 0; </span><span class="v">i</span><span class="n"> &lt;= 21; ++</span><span class="v">i</span><span class="n"> )</span></div>
<div class="dot" style="top:441.8px"></div>
<div class="ln" style="top:434px">15</div>
<div class="cl" style="top:434px"><span class="n">    </span><span class="v">v10</span><span class="n">[</span><span class="v">i</span><span class="n">] = </span><span class="b">_IO_getc</span><span class="n">(</span><span class="v">fp</span><span class="n">);</span></div>
<div class="dot" style="top:469.8px"></div>
<div class="ln" style="top:462px">16</div>
<div class="cl" style="top:462px"><span class="n">  </span><span class="b">fclose</span><span class="n">(</span><span class="v">fp</span><span class="n">);</span></div>
<div class="dot" style="top:497.8px"></div>
<div class="ln" style="top:490px">17</div>
<div class="cl" style="top:490px"><span class="n">  </span><span class="v">v9</span><span class="n"> = </span><span class="v">v10</span><span class="n">;</span></div>
<div class="dot" style="top:525.8px"></div>
<div class="ln" style="top:518px">18</div>
<div class="cl" style="top:518px"><span class="n">  </span><span class="b">puts</span><span class="n">(</span><span class="s">"what's the flag"</span><span class="n">);</span></div>
<div class="dot" style="top:553.8px"></div>
<div class="ln" style="top:546px">19</div>
<div class="cl" style="top:546px"><span class="n">  </span><span class="b">fflush</span><span class="n">(</span><span class="b">_bss_start</span><span class="n">);</span></div>
<div class="dot" style="top:581.8px"></div>
<div class="ln" style="top:574px">20</div>
<div class="cl" style="top:574px"><span class="n">  </span><span class="v">format</span><span class="n"> = 0;</span></div>
<div class="dot" style="top:609.8px"></div>
<div class="ln" style="top:602px">21</div>
<div class="cl" style="top:602px"><span class="n">  </span><span class="b">__isoc99_scanf</span><span class="n">(</span><span class="s">"%ms"</span><span class="n">, &amp;</span><span class="v">format</span><span class="n">);</span></div>
<div class="dot" style="top:637.8px"></div>
<div class="ln" style="top:630px">22</div>
<div class="cl" style="top:630px"><span class="n">  for ( </span><span class="v">j</span><span class="n"> = 0; </span><span class="v">j</span><span class="n"> &lt;= 21; ++</span><span class="v">j</span><span class="n"> )</span></div>
<div class="ln" style="top:658px">23</div>
<div class="cl" style="top:658px"><span class="n">  {</span></div>
<div class="dot" style="top:693.8px"></div>
<div class="ln" style="top:686px">24</div>
<div class="cl" style="top:686px"><span class="n">    </span><span class="v">v4</span><span class="n"> = </span><span class="v">format</span><span class="n">[</span><span class="v">j</span><span class="n">];</span></div>
<div class="dot" style="top:721.8px"></div>
<div class="ln" style="top:714px">25</div>
<div class="cl" style="top:714px"><span class="n">    if ( !</span><span class="v">v4</span><span class="n"> || </span><span class="v">v10</span><span class="n">[</span><span class="v">j</span><span class="n">] != </span><span class="v">v4</span><span class="n"> )</span></div>
<div class="ln" style="top:742px">26</div>
<div class="cl" style="top:742px"><span class="n">    {</span></div>
<div class="dot" style="top:777.8px"></div>
<div class="ln" style="top:770px">27</div>
<div class="cl" style="top:770px"><span class="n">      </span><span class="b">puts</span><span class="n">(</span><span class="s">"You answered:"</span><span class="n">);</span></div>
<div class="dot" style="top:805.8px"></div>
<div class="ln" style="top:798px">28</div>
<div class="cl" style="top:798px"><span class="n">      </span><span class="b">printf</span><span class="n">(</span><span class="v">format</span><span class="n">);</span></div>
<div class="dot" style="top:833.8px"></div>
<div class="ln" style="top:826px">29</div>
<div class="cl" style="top:826px"><span class="n">      </span><span class="b">puts</span><span class="n">(</span><span class="s">"\nBut that was totally wrong lol get rekt"</span><span class="n">);</span></div>
<div class="dot" style="top:861.8px"></div>
<div class="ln" style="top:854px">30</div>
<div class="cl" style="top:854px"><span class="n">      </span><span class="b">fflush</span><span class="n">(</span><span class="b">_bss_start</span><span class="n">);</span></div>
<div class="dot" style="top:889.8px"></div>
<div class="ln" style="top:882px">31</div>
<div class="cl" style="top:882px"><span class="n">      return 0;</span></div>
<div class="ln" style="top:910px">32</div>
<div class="cl" style="top:910px"><span class="n">    }</span></div>
<div class="ln" style="top:938px">33</div>
<div class="cl" style="top:938px"><span class="n">  }</span></div>
<div class="dot" style="top:973.8px"></div>
<div class="ln" style="top:966px">34</div>
<div class="cl" style="top:966px"><span class="n">  </span><span class="b">printf</span><span class="n">(</span><span class="s">"That's right, the flag is %s\n"</span><span class="n">, </span><span class="v">v9</span><span class="n">);</span></div>
<div class="dot" style="top:1001.8px"></div>
<div class="ln" style="top:994px">35</div>
<div class="cl" style="top:994px"><span class="n">  </span><span class="b">fflush</span><span class="n">(</span><span class="b">_bss_start</span><span class="n">);</span></div>
<div class="dot" style="top:1029.8px"></div>
<div class="ln" style="top:1022px">36</div>
<div class="cl" style="top:1022px"><span class="n">  return 0;</span></div>
<div class="dot" style="top:1057.8px"></div>
<div class="ln" style="top:1050px">37</div>
<div class="cl" style="top:1050px"><span class="n">}</span></div>
<div class="abs" style="left:946px;top:798px;width:3.5px;height:28px;background:#000"></div><svg class="abs" style="left:960px;top:775px" width="180" height="50" viewBox="960 775 180 50"><path d="M1122.1,786.3 L1121.9,784.9 L981.6,806.6 L982.4,811.4 Z" fill="#fa0a0a"/><path d="M970,809.6 L983.6,802.3 L982.3,809 L983.3,814 Z" fill="#fa0a0a"/></svg>
</body></html>
